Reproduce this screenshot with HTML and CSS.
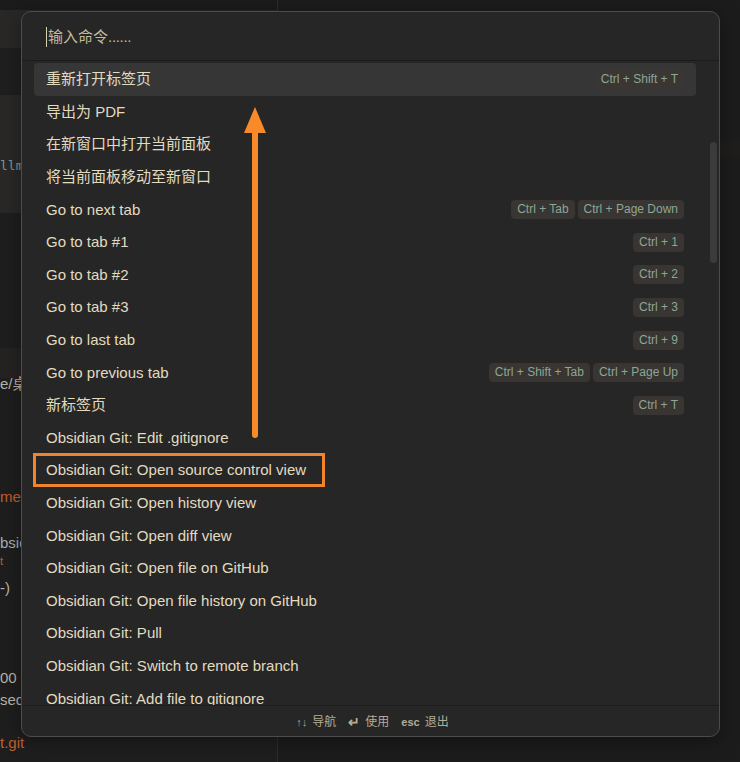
FILE: index.html
```html
<!DOCTYPE html>
<html lang="zh">
<head>
<meta charset="utf-8">
<title>Command palette</title>
<link rel="stylesheet" href="styles.css">
</head>
<body>
<div class="app">
  <div class="editor">
    <div class="band band-top"></div>
    <div class="band band-head"></div>
    <div class="band band-dark"></div>
    <div class="band band-code"><span class="code-text">llm</span></div>
    <div class="band band-dark2"></div>
    <div class="band band-warm"></div>
    <div class="lines">
      <div class="ln l1">e/桌</div>
      <div class="ln l2 orange">mee</div>
      <div class="ln l3 bluegrey">bsid</div>
      <div class="ln l4 orange small">t</div>
      <div class="ln l5">-)</div>
      <div class="ln l6">00 l</div>
      <div class="ln l7">sed</div>
      <div class="ln l8 orange">t.git</div>
    </div>
  </div>
  <div class="pane-divider"></div>
  <div class="side">
    <div class="side-top"></div>
    <div class="side-band"></div>
  </div>
</div>

<div class="modal">
  <div class="prompt">
    <span class="caret"></span><span class="placeholder">输入命令<span class="dots">......</span></span>
  </div>
  <div class="results">
    <div class="item selected"><span class="label">重新打开标签页</span><span class="keys"><kbd>Ctrl + Shift + T</kbd></span></div>
    <div class="item"><span class="label">导出为 PDF</span></div>
    <div class="item"><span class="label">在新窗口中打开当前面板</span></div>
    <div class="item"><span class="label">将当前面板移动至新窗口</span></div>
    <div class="item"><span class="label">Go to next tab</span><span class="keys"><kbd>Ctrl + Tab</kbd><kbd>Ctrl + Page Down</kbd></span></div>
    <div class="item"><span class="label">Go to tab #1</span><span class="keys"><kbd>Ctrl + 1</kbd></span></div>
    <div class="item"><span class="label">Go to tab #2</span><span class="keys"><kbd>Ctrl + 2</kbd></span></div>
    <div class="item"><span class="label">Go to tab #3</span><span class="keys"><kbd>Ctrl + 3</kbd></span></div>
    <div class="item"><span class="label">Go to last tab</span><span class="keys"><kbd>Ctrl + 9</kbd></span></div>
    <div class="item"><span class="label">Go to previous tab</span><span class="keys"><kbd>Ctrl + Shift + Tab</kbd><kbd>Ctrl + Page Up</kbd></span></div>
    <div class="item"><span class="label">新标签页</span><span class="keys"><kbd>Ctrl + T</kbd></span></div>
    <div class="item"><span class="label">Obsidian Git: Edit .gitignore</span></div>
    <div class="item"><span class="label">Obsidian Git: Open source control view</span></div>
    <div class="item"><span class="label">Obsidian Git: Open history view</span></div>
    <div class="item"><span class="label">Obsidian Git: Open diff view</span></div>
    <div class="item"><span class="label">Obsidian Git: Open file on GitHub</span></div>
    <div class="item"><span class="label">Obsidian Git: Open file history on GitHub</span></div>
    <div class="item"><span class="label">Obsidian Git: Pull</span></div>
    <div class="item"><span class="label">Obsidian Git: Switch to remote branch</span></div>
    <div class="item"><span class="label">Obsidian Git: Add file to gitignore</span></div>
    <div class="scrollbar"></div>
  </div>
  <div class="instructions">
    <span class="instr"><span class="sym">↑↓</span>导航</span>
    <span class="instr"><span class="sym enter">↵</span>使用</span>
    <span class="instr"><span class="sym esc">esc</span>退出</span>
  </div>
</div>

<div class="highlight-box"></div>
<svg class="arrow" width="30" height="340" viewBox="0 0 30 340" aria-hidden="true">
  <line x1="15" y1="20" x2="15" y2="328" stroke="#f98a2a" stroke-width="6" stroke-linecap="round"/>
  <polygon points="15,0 4,26 26,26" fill="#f98a2a"/>
</svg>
</body>
</html>
```

FILE: styles.css
```css
* { box-sizing: border-box; }

html, body {
  margin: 0;
  padding: 0;
  width: 740px;
  height: 762px;
  overflow: hidden;
  background: #1c1c1c;
  font-family: "Liberation Sans", "Noto Sans CJK SC", sans-serif;
}

.app {
  display: flex;
  width: 740px;
  height: 762px;
}

.editor {
  width: 277px;
  height: 762px;
  background: #1e1e1e;
  display: flex;
  flex-direction: column;
  overflow: hidden;
}

.band { flex: none; }
.band-top { height: 10px; background: #1b1b1b; }
.band-head { height: 38px; background: #2a2827; }
.band-dark { height: 47px; background: #1f1f1f; }
.band-code {
  height: 118px;
  background: #2a2826;
  display: flex;
  align-items: center;
}
.code-text {
  font-family: "DejaVu Sans Mono", monospace;
  font-size: 13px;
  color: #6f9c9a;
  margin-top: 22px;
}
.band-dark2 { height: 135px; background: #1e1e1e; }
.band-warm { height: 30px; background: #252322; }

.lines {
  display: flex;
  flex-direction: column;
  align-items: flex-start;
  color: #b9b4a8;
  font-size: 15px;
}
.ln { height: 20px; line-height: 20px; white-space: nowrap; }
.l1 { margin-top: -4px; }
.l2 { margin-top: 93px; }
.l3 { margin-top: 26px; }
.l4 { margin-top: 1px; font-size: 11px; height: 14px; line-height: 14px; }
.l5 { margin-top: 10px; }
.l6 { margin-top: 70px; }
.l7 { margin-top: 2px; }
.l8 { margin-top: 23px; }
.orange { color: #c25f2a; }
.bluegrey { color: #a6b0b4; }

.pane-divider { width: 1px; background: #2d2d2d; }

.side {
  flex: 1;
  background: #1c1c1c;
  display: flex;
  flex-direction: column;
}
.side-top { height: 140px; }
.side-band { height: 17px; background: #201e1d; }

/* modal */
.modal {
  position: absolute;
  left: 21px;
  top: 11px;
  width: 699px;
  height: 726px;
  background: #262626;
  border: 1px solid #4c4c4c;
  border-radius: 10px;
  display: flex;
  flex-direction: column;
  overflow: hidden;
  box-shadow: 0 4px 20px rgba(0,0,0,0.35);
}

.prompt {
  height: 49px;
  flex: none;
  border-bottom: 1px solid #1c1c1c;
  display: flex;
  align-items: center;
  padding-left: 24px;
}
.caret {
  width: 1px;
  height: 20px;
  background: #d8cfae;
  margin-top: 1px;
}
.placeholder {
  color: #c4bb9e;
  font-size: 15px;
  line-height: 18px;
  margin-left: 1px;
  margin-top: 1px;
}
.dots { letter-spacing: -0.3px; }

.results {
  position: relative;
  flex: 1;
  overflow: hidden;
  padding: 2px 23px 0 12px;
}

.item {
  height: 32.6px;
  display: flex;
  align-items: center;
  justify-content: space-between;
  padding: 0 12px;
  border-radius: 4px;
  color: #e2dbc0;
  font-size: 15px;
  white-space: nowrap;
}
.label { line-height: 18px; }
.item.selected { background: #363636; }

.keys { display: flex; gap: 3px; }
kbd {
  font-family: "Liberation Sans", "Noto Sans CJK SC", sans-serif;
  font-size: 12px;
  color: #8ea697;
  background: #383532;
  border-radius: 4px;
  padding: 0 6px;
  height: 19px;
  line-height: 19px;
}
.item.selected kbd { background: #393634; }

.scrollbar {
  position: absolute;
  left: 688px;
  top: 81px;
  width: 7px;
  height: 121px;
  border-radius: 4px;
  background: #3b3b3b;
}

.instructions {
  height: 31px;
  flex: none;
  border-top: 1px solid #1c1c1c;
  display: flex;
  justify-content: center;
  align-items: center;
  gap: 12px;
  color: #b3ab97;
  font-size: 12px;
  padding-left: 4px;
  padding-top: 2px;
}
.instr { display: flex; align-items: center; gap: 5px; line-height: 16px; }
.sym { font-size: 11px; }
.enter { font-size: 14px; font-weight: bold; }
.esc { font-weight: bold; font-size: 11px; }

/* annotations */
.highlight-box {
  position: absolute;
  left: 33px;
  top: 453px;
  width: 292px;
  height: 34px;
  border: 3px solid #f0842c;
}

.arrow {
  position: absolute;
  left: 240px;
  top: 107px;
}
```
